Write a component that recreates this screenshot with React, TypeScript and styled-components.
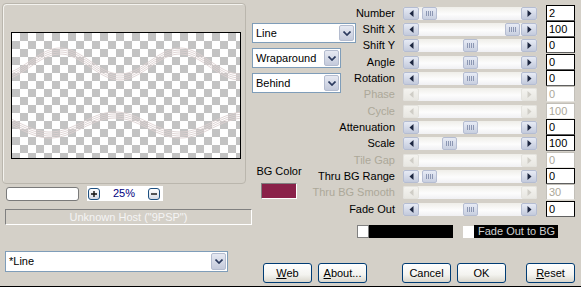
import React from "react";
import styled, { createGlobalStyle } from "styled-components";

const GlobalStyle = createGlobalStyle`
  body {
    margin: 0;
    background: #d4d0c8;
    font-family: "Liberation Sans", Arial, sans-serif;
    font-size: 11px;
    line-height: 13px;
  }
  * { box-sizing: border-box; }
`;

const Window = styled.div`
  display: flex;
  width: 581px;
  height: 287px;
  background: #d4d0c8;
  border-bottom: 1px solid #000;
  overflow: hidden;
  color: #000;
`;

/* ---------- left pane ---------- */

const LeftPane = styled.div`
  display: flex;
  flex-direction: column;
  width: 252px;
  flex-shrink: 0;
`;

const GroupBox = styled.div`
  margin: 3px 0 0 2px;
  width: 244px;
  height: 181px;
  padding: 28px 0 0 8px;
  border: 1px solid #bab6ad;
  border-radius: 4px;
  box-shadow: inset 1px 1px 0 #f4f3ef;
`;

const Preview = styled.div`
  width: 230px;
  height: 127px;
  border: 1px solid #000;
  background-color: #fff;
  background-image: conic-gradient(#c3c3c3 0 25%, #fff 0 50%, #c3c3c3 0 75%, #fff 0);
  background-size: 16px 16px;
  svg { display: block; }
`;

const ZoomRow = styled.div`
  display: flex;
  align-items: center;
  height: 15px;
  margin: 2px 0 0 6px;
`;

const ZoomInput = styled.div`
  width: 73px;
  height: 14px;
  background: #fff;
  border: 1px solid #7a7a7a;
  border-radius: 3px;
`;

const ZoomField = styled.div`
  display: flex;
  align-items: center;
  justify-content: space-between;
  width: 76px;
  height: 15px;
  margin-left: 8px;
  padding: 0 3px 0 1px;
  background: #fff;
`;

const ZoomButton = styled.div`
  display: flex;
  align-items: center;
  justify-content: center;
  width: 12px;
  height: 12px;
  border: 1px solid #1c4f80;
  border-radius: 3px;
  background: linear-gradient(#ffffff, #d6dbe6);
`;

const ZoomValue = styled.span`
  color: #000080;
  line-height: 15px;
`;

const StatusBar = styled.div`
  margin: 8px 0 0 5px;
  width: 247px;
  height: 16px;
  border-style: solid;
  border-width: 1px;
  border-color: #808080 #fff #fff #808080;
  color: #f4f4f4;
  text-align: center;
  line-height: 14px;
`;

const Combo = styled.div<{ $w: number; $h: number }>`
  display: flex;
  width: ${(p) => p.$w}px;
  height: ${(p) => p.$h}px;
  line-height: ${(p) => p.$h - 2}px;
  background: #fff;
  border: 1px solid #7f9db9;
  flex-shrink: 0;
`;

const ComboText = styled.span`
  flex: 1;
  padding-left: 3px;
  white-space: nowrap;
`;

const ComboButton = styled.div`
  display: flex;
  align-items: center;
  justify-content: center;
  width: 15px;
  margin: 1px;
  border: 1px solid #b4bccf;
  border-radius: 2px;
  background: linear-gradient(#e6e9f2, #c4cadb);
`;

const BottomCombo = styled.div`
  margin: 26px 0 0 5px;
`;

/* ---------- right pane ---------- */

const RightPane = styled.div`
  display: flex;
  flex-direction: column;
  flex: 1;
`;

const TopRow = styled.div`
  display: flex;
`;

const MidColumn = styled.div`
  display: flex;
  flex-direction: column;
  gap: 5px;
  width: 65px;
  flex-shrink: 0;
  padding-top: 23px;
`;

const BgColorBlock = styled.div`
  display: flex;
  flex-direction: column;
  align-items: center;
  width: 44px;
  margin: 67px 0 0 5px;
`;

const BgLabel = styled.span`
  white-space: nowrap;
`;

const Swatch = styled.div`
  width: 36px;
  height: 16px;
  margin-top: 5px;
  border-style: solid;
  border-width: 1px;
  border-color: #808080 #fff #fff #808080;
  background: #8a2149;
`;

const ParamsGrid = styled.div`
  display: grid;
  grid-template-columns: 78px 134px 30px;
  grid-template-rows: 16px 16px 17px 16px 16px 17px 16px 16px 17px 16px 16px 17px 16px;
  column-gap: 8px;
  align-items: start;
  padding-top: 5px;
`;

const ParamLabel = styled.span<{ $disabled?: boolean }>`
  justify-self: end;
  white-space: nowrap;
  line-height: 17px;
  color: ${(p) => (p.$disabled ? "#aca899" : "#000")};
`;

const Track = styled.div`
  display: flex;
  height: 13px;
  margin-top: 2px;
  background: linear-gradient(#efeee9, #fdfdfd 55%, #f0f0f3);
  border-radius: 2px;
`;

const ArrowButton = styled.div<{ $disabled?: boolean }>`
  display: flex;
  align-items: center;
  justify-content: center;
  width: 16px;
  flex-shrink: 0;
  border: 1px solid ${(p) => (p.$disabled ? "#e4e3de" : "#b5bdd2")};
  border-radius: 2px;
  background: ${(p) =>
    p.$disabled ? "linear-gradient(#f4f3ef, #e8e7e2)" : "linear-gradient(#e7ebf5, #c3cadc)"};
`;

const Lane = styled.div`
  display: flex;
  align-items: center;
  flex: 1;
`;

const Thumb = styled.div`
  display: flex;
  align-items: center;
  justify-content: center;
  gap: 1px;
  width: 15px;
  height: 13px;
  border: 1px solid #b5bdd2;
  border-radius: 2px;
  background: linear-gradient(#e7ebf5, #c8cfe0);
`;

const Grip = styled.i`
  display: block;
  width: 1px;
  height: 5px;
  background: #8c97b3;
`;

const ValueBox = styled.div<{ $disabled?: boolean }>`
  justify-self: end;
  width: 29px;
  height: 16px;
  padding-left: 2px;
  line-height: 14px;
  background: #fff;
  border: 1px solid ${(p) => (p.$disabled ? "#c2bfb8" : "#000")};
  border-bottom-color: ${(p) => (p.$disabled ? "#e8e6e1" : "#606060")};
  color: ${(p) => (p.$disabled ? "#aca899" : "#000")};
`;

const FadeRow = styled.div`
  display: flex;
  align-items: center;
  height: 13px;
  margin-top: 8px;
  padding-left: 105px;
`;

const ColorWell = styled.div`
  width: 12px;
  height: 13px;
  border: 1px solid #808080;
  background: #fff;
`;

const BlackBar = styled.div`
  width: 84px;
  height: 13px;
  background: #000;
`;

const CheckBox = styled.div`
  width: 11px;
  height: 12px;
  margin-left: 10px;
  background: #fff;
`;

const CheckLabel = styled.span`
  width: 84px;
  height: 13px;
  padding-left: 4px;
  background: #000;
  color: #d0d0d0;
  white-space: nowrap;
`;

const ButtonRow = styled.div`
  display: flex;
  margin-top: 25px;
  padding-left: 11px;
`;

const Button = styled.div<{ $gap?: number }>`
  width: 49px;
  height: 20px;
  margin-left: ${(p) => p.$gap ?? 0}px;
  line-height: 18px;
  text-align: center;
  border: 1px solid #003c74;
  border-radius: 3px;
  background: linear-gradient(#ffffff, #f3f3ef 60%, #d9d6cc);
  u { text-decoration: underline; }
`;

/* ---------- pieces ---------- */

const Chevron = () => (
  <svg width="8" height="5" viewBox="0 0 8 5">
    <path d="M0.5 0.5 L4 4 L7.5 0.5" fill="none" stroke="#2b3a5e" strokeWidth="1.7" />
  </svg>
);

const Arrow = ({ dir, disabled }: { dir: "l" | "r"; disabled?: boolean }) => (
  <svg width="5" height="7" viewBox="0 0 5 7">
    <path
      d={dir === "l" ? "M4.5 0 L0.5 3.5 L4.5 7 Z" : "M0.5 0 L4.5 3.5 L0.5 7 Z"}
      fill={disabled ? "#cfcdc6" : "#1c2640"}
    />
  </svg>
);

function ComboBox({ text, w, h = 20 }: { text: string; w: number; h?: number }) {
  return (
    <Combo $w={w} $h={h}>
      <ComboText>{text}</ComboText>
      <ComboButton>
        <Chevron />
      </ComboButton>
    </Combo>
  );
}

function ScrollSlider({ thumb, disabled }: { thumb?: number; disabled?: boolean }) {
  return (
    <Track>
      <ArrowButton $disabled={disabled}>
        <Arrow dir="l" disabled={disabled} />
      </ArrowButton>
      <Lane>
        {!disabled && thumb !== undefined ? (
          <Thumb style={{ marginLeft: thumb }}>
            <Grip />
            <Grip />
            <Grip />
            <Grip />
          </Thumb>
        ) : null}
      </Lane>
      <ArrowButton $disabled={disabled}>
        <Arrow dir="r" disabled={disabled} />
      </ArrowButton>
    </Track>
  );
}

function wave(cy: number, amp: number, period: number, peak: number, off: number) {
  let d = "";
  for (let x = 0; x <= 228; x += 3) {
    const y = cy - amp * Math.cos(((x - peak) / period) * Math.PI * 2) + off;
    d += (x === 0 ? "M" : "L") + x + " " + y.toFixed(1) + " ";
  }
  return d;
}

function WaveLines() {
  const offs = [-3, -1, 1, 3];
  return (
    <svg width="228" height="125" viewBox="0 0 228 125">
      {offs.map((o) => (
        <path key={"a" + o} d={wave(31, 13, 120, 48, o)} fill="none" stroke="#ddd0d0" strokeWidth="0.9" />
      ))}
      {offs.map((o) => (
        <path key={"b" + o} d={wave(92, -10, 130, 38, o)} fill="none" stroke="#ddd0d0" strokeWidth="0.9" />
      ))}
    </svg>
  );
}

const params = [
  { label: "Number", value: "2", thumb: 3 },
  { label: "Shift X", value: "100", thumb: 86 },
  { label: "Shift Y", value: "0", thumb: 44 },
  { label: "Angle", value: "0", thumb: 44 },
  { label: "Rotation", value: "0", thumb: 44 },
  { label: "Phase", value: "0", disabled: true },
  { label: "Cycle", value: "100", disabled: true },
  { label: "Attenuation", value: "0", thumb: 44 },
  { label: "Scale", value: "100", thumb: 23 },
  { label: "Tile Gap", value: "0", disabled: true },
  { label: "Thru BG Range", value: "0", thumb: 3 },
  { label: "Thru BG Smooth", value: "30", disabled: true },
  { label: "Fade Out", value: "0", thumb: 44 },
];

export default function App() {
  return (
    <>
      <GlobalStyle />
      <Window>
        <LeftPane>
          <GroupBox>
            <Preview>
              <WaveLines />
            </Preview>
          </GroupBox>
          <ZoomRow>
            <ZoomInput />
            <ZoomField>
              <ZoomButton>
                <svg width="6" height="6" viewBox="0 0 6 6">
                  <path d="M0 3 H6 M3 0 V6" stroke="#111" strokeWidth="1.4" />
                </svg>
              </ZoomButton>
              <ZoomValue>25%</ZoomValue>
              <ZoomButton>
                <svg width="6" height="6" viewBox="0 0 6 6">
                  <path d="M0 3 H6" stroke="#111" strokeWidth="1.4" />
                </svg>
              </ZoomButton>
            </ZoomField>
          </ZoomRow>
          <StatusBar>Unknown Host ("9PSP")</StatusBar>
          <BottomCombo>
            <ComboBox text="*Line" w={223} h={21} />
          </BottomCombo>
        </LeftPane>

        <RightPane>
          <TopRow>
            <MidColumn>
              <ComboBox text="Line" w={104} />
              <ComboBox text="Wraparound" w={89} />
              <ComboBox text="Behind" w={89} />
              <BgColorBlock>
                <BgLabel>BG Color</BgLabel>
                <Swatch />
              </BgColorBlock>
            </MidColumn>
            <ParamsGrid>
              {params.map((p) => (
                <React.Fragment key={p.label}>
                  <ParamLabel $disabled={p.disabled}>{p.label}</ParamLabel>
                  <ScrollSlider thumb={p.thumb} disabled={p.disabled} />
                  <ValueBox $disabled={p.disabled}>{p.value}</ValueBox>
                </React.Fragment>
              ))}
            </ParamsGrid>
          </TopRow>
          <FadeRow>
            <ColorWell />
            <BlackBar />
            <CheckBox />
            <CheckLabel>Fade Out to BG</CheckLabel>
          </FadeRow>
          <ButtonRow>
            <Button>
              <u>W</u>eb
            </Button>
            <Button $gap={6}>
              <u>A</u>bout...
            </Button>
            <Button $gap={35}>Cancel</Button>
            <Button $gap={6}>OK</Button>
            <Button $gap={20}>
              <u>R</u>eset
            </Button>
          </ButtonRow>
        </RightPane>
      </Window>
    </>
  );
}
